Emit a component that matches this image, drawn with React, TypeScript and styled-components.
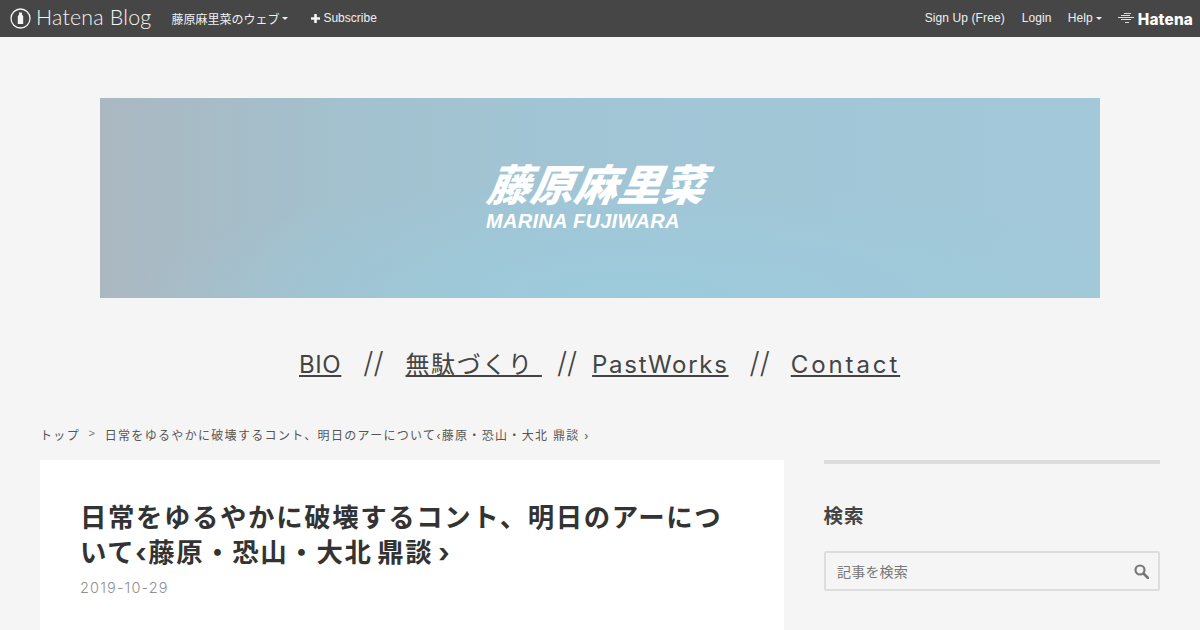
import React from "react";
import styled, { createGlobalStyle } from "styled-components";

const cjk = '"Noto Sans CJK JP", sans-serif';

const Global = createGlobalStyle`
  html, body { margin: 0; padding: 0; background: #f5f5f5; height: 630px; overflow: hidden; }
  body { font-family: Inter, "Noto Sans CJK JP", sans-serif; color: #333; }
`;

const Page = styled.div`
  width: 1200px;
  height: 630px;
  overflow: hidden;
  display: flex;
  flex-direction: column;
`;

const TopBar = styled.header`
  height: 37px;
  flex: none;
  box-sizing: border-box;
  padding-bottom: 1px;
  background: #464646;
  display: flex;
  align-items: center;
  justify-content: space-between;
  font-family: "Liberation Sans", "Noto Sans CJK JP", sans-serif;
  font-size: 12px;
  color: #f0f0f0;
`;

const BarGroup = styled.div<{ $track?: number }>`
  display: flex;
  align-items: center;
  letter-spacing: ${(p) => p.$track ?? 0}px;
`;

const BrandLink = styled.div`
  display: flex;
  align-items: center;
  gap: 5px;
  margin-left: 10px;
  margin-right: 20px;
`;

const BrandText = styled.span`
  font-family: Lato, sans-serif;
  font-weight: 300;
  font-size: 21.4px;
  letter-spacing: 0.2px;
  color: #f4f4f4;
  line-height: 1;
`;

const BarItem = styled.span<{ $gap?: number }>`
  display: inline-flex;
  align-items: center;
  margin-right: ${(p) => p.$gap ?? 0}px;
  white-space: nowrap;
`;

const Caret = styled.span`
  display: inline-block;
  width: 0;
  height: 0;
  margin-left: 3px;
  border-left: 3px solid transparent;
  border-right: 3px solid transparent;
  border-top: 3px solid #eee;
`;

const HatenaWord = styled.span`
  font-family: Inter, sans-serif;
  font-weight: 800;
  font-size: 15.3px;
  color: #fff;
  letter-spacing: 0.2px;
  margin-left: 2px;
  margin-right: 7px;
  position: relative;
  top: 1px;
`;

const Main = styled.main`
  flex: 1;
  display: flex;
  flex-direction: column;
  min-height: 0;
`;

const Banner = styled.div`
  width: 1000px;
  height: 200px;
  flex: none;
  margin: 61px auto 0;
  background:
    radial-gradient(ellipse 500px 120px at 530px 200px, #9ccbdc 0%, rgba(156, 203, 220, 0) 100%),
    linear-gradient(90deg, #abb8c1 0%, #a3c0cd 22%, #a1c5d5 45%, #a2c8d9 100%);
  display: flex;
  flex-direction: column;
  align-items: flex-start;
  padding: 59px 0 0 386px;
  box-sizing: border-box;
  color: #fff;
`;

const BannerName = styled.div`
  font-family: "Noto Sans CJK JP", sans-serif;
  font-weight: 900;
  font-size: 43px;
  line-height: 50px;
  letter-spacing: 0.6px;
  margin-left: -3px;
  transform: skewX(-22deg);
  transform-origin: left bottom;
  white-space: nowrap;
`;

const BannerRoman = styled.div`
  font-family: "Liberation Sans", sans-serif;
  font-weight: 700;
  font-style: italic;
  font-size: 20px;
  line-height: 22px;
  letter-spacing: 0.3px;
  margin-top: 3px;
  white-space: nowrap;
`;

const GlobalNav = styled.nav`
  display: flex;
  justify-content: flex-start;
  align-items: baseline;
  margin: 47px 0 0 299px;
  height: 36px;
  font-family: Inter, "Noto Sans CJK JP", sans-serif;
  font-size: 24px;
  line-height: 36px;
  color: #444;
  font-weight: 400;
`;

const NavLink = styled.span<{ $track: number }>`
  letter-spacing: ${(p) => p.$track}px;
  text-decoration: underline;
  text-underline-offset: 2px;
  text-decoration-thickness: 2px;
  white-space: pre;
`;

const NavSep = styled.span<{ $l: number; $r: number }>`
  margin: 0 ${(p) => p.$r}px 0 ${(p) => p.$l}px;
  font-size: 29px;
  font-weight: 300;
  letter-spacing: 0;
`;

const Crumbs = styled.div`
  display: flex;
  align-items: center;
  margin: 41px 0 0 40px;
  height: 24px;
  font-family: "Liberation Sans", "Noto Sans CJK JP", sans-serif;
  font-size: 12px;
  letter-spacing: 1.32px;
  color: #555;
  white-space: nowrap;
`;

const CrumbSep = styled.span`
  margin: 0 8.5px;
  font-size: 11px;
  position: relative;
  top: -1px;
  color: #777;
`;

const Columns = styled.div`
  display: grid;
  grid-template-columns: 744px 336px;
  column-gap: 40px;
  margin: 14px 40px 0;
  flex: 1;
  min-height: 0;
`;

const Article = styled.article`
  background: #fff;
  padding: 40px 40px 0;
`;

const Title = styled.h1`
  margin: 0;
  font-family: Inter, "Noto Sans CJK JP", sans-serif;
  font-size: 26.4px;
  line-height: 35px;
  letter-spacing: 1.63px;
  word-spacing: -3px;
  font-weight: 700;
  color: #333;
`;

const DateLine = styled.div`
  margin-top: 9px;
  font-family: Inter, sans-serif;
  font-weight: 300;
  font-size: 14.5px;
  letter-spacing: 1.15px;
  color: #8f8f8f;
`;

const Side = styled.aside`
  border-top: 4px solid #ddd;
`;

const SideTitle = styled.h2`
  margin: 37px 0 0 -0.5px;
  font-size: 19.5px;
  line-height: 28px;
  font-weight: 700;
  letter-spacing: 1px;
  color: #444;
  font-family: ${cjk};
`;

const SearchBox = styled.div`
  display: flex;
  align-items: center;
  justify-content: space-between;
  margin-top: 22px;
  height: 40px;
  box-sizing: border-box;
  border: 2px solid #ddd;
  border-radius: 2px;
  padding: 0 9px 0 11px;
  background: #f5f5f5;
`;

const Placeholder = styled.span`
  font-size: 14px;
  letter-spacing: 0.2px;
  color: #777;
  font-family: ${cjk};
`;

const BrandIcon = () => (
  <svg width="21" height="21" viewBox="0 0 21 21" aria-hidden="true">
    <circle cx="10.5" cy="10.5" r="9.5" fill="none" stroke="#f4f4f4" strokeWidth="1.3" />
    <path d="M7.8 16V8.2L9 6.6V4.4h3v2.2l1.2 1.6V16Z" fill="#f4f4f4" />
  </svg>
);

const PlusIcon = () => (
  <svg width="9" height="9" viewBox="0 0 9 9" aria-hidden="true" style={{ marginRight: 3 }}>
    <path d="M3.2 0h2.6v3.2H9v2.6H5.8V9H3.2V5.8H0V3.2h3.2z" fill="#f4f4f4" />
  </svg>
);

const HatenaMark = () => (
  <svg width="18" height="12" viewBox="0 0 18 12" aria-hidden="true">
    <g stroke="#dcdcdc" strokeWidth="1" fill="none">
      <path d="M6 1.5h7" />
      <path d="M3 3.5h9" />
      <path d="M0 5.5h16" />
      <path d="M3 7.5h10" />
      <path d="M7 10.5h4" />
    </g>
  </svg>
);

const SearchIcon = () => (
  <svg width="15" height="15" viewBox="0 0 15 15" aria-hidden="true">
    <circle cx="6" cy="6" r="4.5" fill="none" stroke="#777" strokeWidth="2.2" />
    <path d="M9.5 9.5 14 14" stroke="#777" strokeWidth="2.6" strokeLinecap="round" />
  </svg>
);

export default function App() {
  return (
    <Page>
      <Global />
      <TopBar>
        <BarGroup>
          <BrandLink>
            <BrandIcon />
            <BrandText>Hatena Blog</BrandText>
          </BrandLink>
          <BarItem $gap={23}>
            藤原麻里菜のウェブ
            <Caret />
          </BarItem>
          <BarItem>
            <PlusIcon />
            Subscribe
          </BarItem>
        </BarGroup>
        <BarGroup $track={0.1}>
          <BarItem $gap={17}>Sign Up (Free)</BarItem>
          <BarItem $gap={16}>Login</BarItem>
          <BarItem $gap={16}>
            Help
            <Caret />
          </BarItem>
          <HatenaMark />
          <HatenaWord>Hatena</HatenaWord>
        </BarGroup>
      </TopBar>
      <Main>
        <Banner>
          <BannerName>藤原麻里菜</BannerName>
          <BannerRoman>MARINA FUJIWARA</BannerRoman>
        </Banner>
        <GlobalNav>
          <NavLink $track={0.6}>BIO</NavLink>
          <NavSep $l={22} $r={22}>//</NavSep>
          <NavLink $track={1.6}>無駄づくり </NavLink>
          <NavSep $l={15} $r={15}>//</NavSep>
          <NavLink $track={1.7}>PastWorks</NavLink>
          <NavSep $l={21} $r={21}>//</NavSep>
          <NavLink $track={2.9}>Contact</NavLink>
        </GlobalNav>
        <Crumbs>
          トップ
          <CrumbSep>&gt;</CrumbSep>
          日常をゆるやかに破壊するコント、明日のアーについて‹藤原・恐山・大北 鼎談 ›
        </Crumbs>
        <Columns>
          <Article>
            <Title>日常をゆるやかに破壊するコント、明日のアーについて‹藤原・恐山・大北 鼎談 ›</Title>
            <DateLine>2019-10-29</DateLine>
          </Article>
          <Side>
            <SideTitle>検索</SideTitle>
            <SearchBox>
              <Placeholder>記事を検索</Placeholder>
              <SearchIcon />
            </SearchBox>
          </Side>
        </Columns>
      </Main>
    </Page>
  );
}
